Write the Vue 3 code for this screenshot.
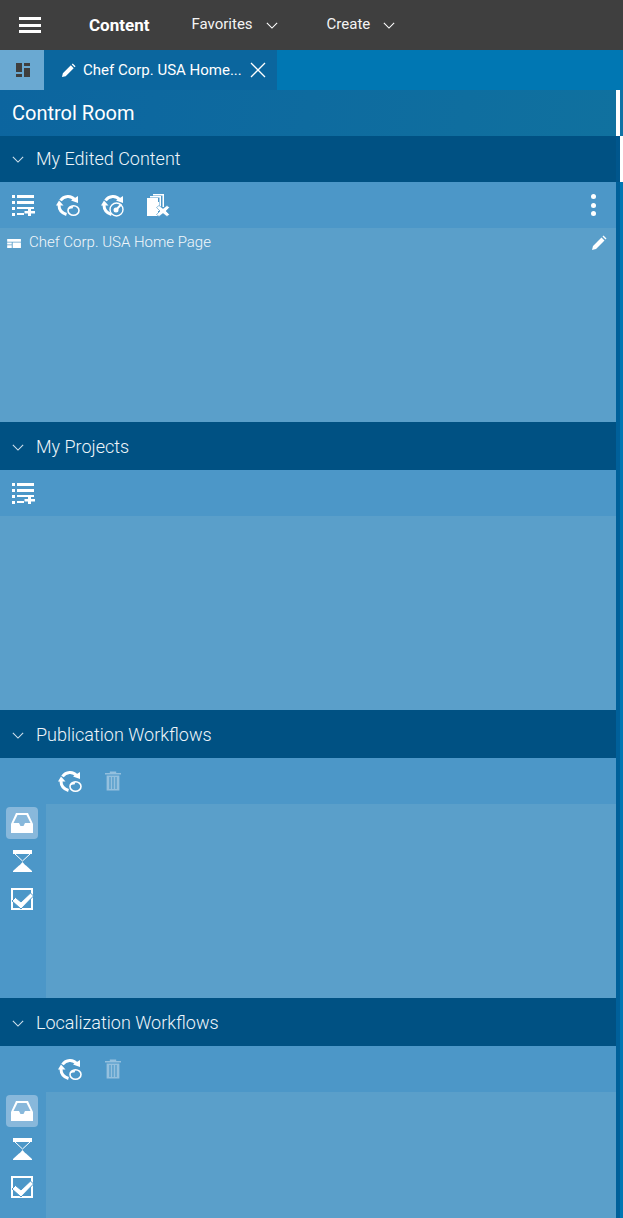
<template>
  <div class="page">
    <header class="top-bar">
      <button class="menu-btn" aria-label="Menu"><span></span><span></span><span></span></button>
      <span class="brand">Content</span>
      <span class="nav-item favorites">Favorites
        <svg class="caret" viewBox="0 0 14 8"><path d="M1 1l6 6 6-6" /></svg>
      </span>
      <span class="nav-item create">Create
        <svg class="caret" viewBox="0 0 14 8"><path d="M1 1l6 6 6-6" /></svg>
      </span>
    </header>

    <nav class="tab-bar">
      <div class="home-tab">
        <svg viewBox="0 0 14 14" width="14" height="14"><path d="M0 0h6v9H0zM8 0h6v3H8zM8 5h6v9H8zM0 11h6v3H0z" /></svg>
      </div>
      <div class="doc-tab">
        <svg class="tab-pencil" viewBox="0 0 16 16" width="15" height="15"><path d="M1 15l1-4 8.500-8.500 3 3L5 14z M11.500 1.500l1-1 3 3-1 1z" /></svg>
        <span class="tab-title">Chef Corp. USA Home...</span>
        <svg class="tab-close" viewBox="0 0 16 16" width="16" height="16"><path d="M1 1l14 14M15 1L1 15" /></svg>
      </div>
    </nav>

    <div class="workspace">
      <main class="room">
        <h1 class="room-title">Control Room</h1>

        <section v-for="panel in panels" :key="panel.title" class="panel" :class="panel.kind">
          <div class="panel-head" :class="{ first: panel.first }">
            <svg class="head-caret" viewBox="0 0 14 8"><path d="M1 1l6 6 6-6" /></svg>
            <span>{{ panel.title }}</span>
          </div>

          <div class="toolbar">
            <template v-if="panel.kind === 'workflow'">
              <svg class="tool wf-refresh" viewBox="0 0 24 24"><use href="#ic-refresh-o" /></svg>
              <svg class="tool trash" viewBox="0 0 20 24"><use href="#ic-trash" /></svg>
            </template>
            <template v-else>
              <svg class="tool" viewBox="0 0 24 24"><use href="#ic-list-add" /></svg>
              <template v-if="panel.full">
                <svg class="tool" viewBox="0 0 24 24"><use href="#ic-refresh-o" /></svg>
                <svg class="tool" viewBox="0 0 24 24"><use href="#ic-refresh-t" /></svg>
                <svg class="tool" viewBox="0 0 24 24"><use href="#ic-docs-x" /></svg>
                <div class="dots"><i></i><i></i><i></i></div>
              </template>
            </template>
          </div>

          <div class="panel-body">
            <div v-if="panel.kind === 'workflow'" class="side">
              <div class="side-btn active"><svg viewBox="0 0 24 24"><use href="#ic-inbox" /></svg></div>
              <div class="side-btn"><svg viewBox="0 0 24 24"><use href="#ic-hourglass" /></svg></div>
              <div class="side-btn"><svg viewBox="0 0 24 24"><use href="#ic-check" /></svg></div>
            </div>
            <div class="list">
              <div v-if="panel.full" class="row">
                <svg class="row-icon" viewBox="0 0 16 12"><path d="M0 1h15v3H0zM0 5h5v2H0zM6 5h9v6H6zM0 8h5v3H0z" /></svg>
                <span class="row-label">Chef Corp. USA Home Page</span>
                <svg class="row-pencil" viewBox="0 0 16 16"><path d="M1 15l1-4 8.500-8.500 3 3L5 14z M11.500 1.500l1-1 3 3-1 1z" /></svg>
              </div>
            </div>
          </div>
        </section>
      </main>

      <!-- two nested scrollbars sit side by side -->
      <div class="track inner">
        <div class="thumb"></div>
        <div class="inner-head"></div>
      </div>
      <div class="track outer">
        <div class="outer-top"></div>
        <div class="thumb"></div>
      </div>
    </div>

    <svg width="0" height="0" class="defs">
      <defs>
        <g id="ic-list-add">
          <path d="M1 2h3v3H1zM6 2h17v3H6zM1 8h3v3H1zM6 8h17v3H6zM1 14h3v3H1zM6 14h17v2H6zM1 20h3v3H1zM6 20h7v2H6z" />
          <path d="M17 15h3v3h4v2.500h-4V23h-3v-2.500h-3.500V18H17z" />
        </g>
        <g id="ic-refresh-o">
          <path d="M4.500 7.500C8 2.500 15 2 18.500 6.500" fill="none" stroke="#fff" stroke-width="3" />
          <path d="M15 7.500l7 2.500V3z" />
          <path d="M0 12.500l3-5 4.500 5z" />
          <path d="M3 12c0 4.500 2.500 8 7.500 9.500" fill="none" stroke="#fff" stroke-width="3" />
          <ellipse cx="17.500" cy="17.500" rx="5.500" ry="4.800" fill="#4c97c8" stroke="#fff" stroke-width="1.600" />
          <path d="M12 16.500c1-2.500 3-3.500 5.500-3.500l-1 2.500c-2 0-3 .5-4.500 1z" />
        </g>
        <g id="ic-refresh-t">
          <path d="M4.500 7.500C8 2.500 15 2 18.500 6.500" fill="none" stroke="#fff" stroke-width="3" />
          <path d="M15 7.500l7 2.500V3z" />
          <path d="M0 12.500l3-5 4.500 5z" />
          <path d="M3 12c0 4.500 2.500 8 7.500 9.500" fill="none" stroke="#fff" stroke-width="3" />
          <circle cx="15.500" cy="16.500" r="6.500" fill="#4c97c8" stroke="#fff" stroke-width="1.400" />
          <circle cx="15" cy="17" r="2.500" />
          <path d="M14.500 16l5-5.500 1.500 1.500-5 5.500z" />
        </g>
        <g id="ic-docs-x">
          <path d="M1 5h11v4h1v9h-1v5H1z" />
          <path d="M4 3h11v11h-1.500V4.500H4zM7 1h11v13h-1.500V2.500H7z" />
          <path d="M13 12.500l4 3 4-3 2.500 2-3.500 3.500 3.500 3.500-2.500 2-4-3-4 3-2.500-2 3.500-3.500-3.500-3.500z" stroke="#4c97c8" stroke-width="0.600" />
        </g>
        <g id="ic-trash">
          <path d="M0 2h20v2H0zM6 0h8v2H6zM2 5h16v19H2z" />
          <path d="M5.500 7h1.500v15H5.500zM9.200 7h1.500v15H9.200zM13 7h1.500v15H13z" fill="#4c97c8" />
        </g>
        <g id="ic-inbox">
          <path fill-rule="evenodd" d="M6 2h12l5 11v9H1v-9zM7.500 4L3.500 12h5.500l1.500 3h3l1.500-3h5.500l-4-8z" />
        </g>
        <g id="ic-hourglass">
          <path d="M3 1h19v4H3z" />
          <path d="M5 5l7.500 7L20 5" fill="none" stroke="#fff" stroke-width="1" />
          <path d="M12.500 13L9 17H16z" />
          <path d="M9 16.500h7l6 5.500v1H3v-1z" />
        </g>
        <g id="ic-check">
          <path fill-rule="evenodd" d="M1 1h22v22H1zM3 3v18h18V3z" />
          <path d="M2 14l3.500-3.500 5.500 4.500L20.500 6l3 3L11 22z" stroke="#4c97c8" stroke-width="1" />
        </g>
      </defs>
    </svg>
  </div>
</template>

<script setup>
const panels = [
  { title: 'My Edited Content', kind: 'edited', full: true, first: true },
  { title: 'My Projects', kind: 'projects' },
  { title: 'Publication Workflows', kind: 'workflow' },
  { title: 'Localization Workflows', kind: 'workflow' }
]
</script>

<style>
html, body {
  margin: 0;
  background: #0077b3;
  overflow: hidden;
}
</style>

<style scoped>
.page {
  width: 623px;
  height: 1218px;
  overflow: hidden;
  display: flex;
  flex-direction: column;
  font-family: Roboto, "Liberation Sans", sans-serif;
  color: #fff;
}

.defs {
  position: absolute;
}

svg {
  fill: #fff;
}

.top-bar {
  height: 50px;
  flex: none;
  background: #3f3f3f;
  display: flex;
  align-items: center;
  font-size: 15px;
}

.menu-btn {
  width: 22px;
  height: 16px;
  margin: 0 0 0 19px;
  padding: 0;
  border: 0;
  background: none;
  display: flex;
  flex-direction: column;
  justify-content: space-between;
}

.menu-btn span {
  display: block;
  height: 3px;
  background: #fff;
}

.brand {
  margin-left: 48px;
  font-size: 17px;
  font-weight: 700;
  margin-top: -1px;
}

.nav-item {
  display: flex;
  align-items: center;
  color: #f4f4f4;
  margin-top: -2px;
}

.favorites {
  margin-left: 42px;
}

.create {
  margin-left: 49px;
}

.caret {
  width: 12px;
  height: 7px;
  margin-left: 13px;
  margin-top: 3px;
  fill: none;
  stroke: #fff;
  stroke-width: 1.3;
}

.tab-bar {
  height: 40px;
  flex: none;
  background: #0077b3;
  display: flex;
}

.home-tab {
  width: 44px;
  padding-left: 2px;
  box-sizing: border-box;
  background: #6aa9d2;
  display: flex;
  align-items: center;
  justify-content: center;
}

.home-tab svg {
  fill: #3f3f3f;
}

.doc-tab {
  width: 233px;
  background: #0b669e;
  display: flex;
  align-items: center;
  font-size: 15px;
}

.tab-pencil {
  margin-left: 17px;
}

.tab-title {
  margin-left: 7px;
  white-space: nowrap;
}

.tab-close {
  margin-left: 8px;
  fill: none;
  stroke: #fff;
  stroke-width: 1.300;
}

.workspace {
  flex: 1;
  display: flex;
  min-height: 0;
}

.room {
  width: 616px;
  flex: none;
  background: #5a9fca;
}

.room-title {
  margin: 0;
  height: 46px;
  padding-left: 12px;
  line-height: 46px;
  font-size: 20px;
  font-weight: 400;
  background: linear-gradient(100deg, #0c659f, #10719f);
}

.panel-head {
  height: 48px;
  background: #005183;
  display: flex;
  align-items: center;
  font-size: 18px;
  font-weight: 300;
  color: #eef5fa;
}

.panel-head.first {
  height: 46px;
  box-sizing: border-box;
  padding-bottom: 2px;
}

.head-caret {
  width: 12px;
  height: 7px;
  margin: 3px 12px 0 12px;
  fill: none;
  stroke: #cfe0ec;
  stroke-width: 1.3;
}

.toolbar {
  height: 46px;
  background: #4c97c8;
  display: flex;
  align-items: center;
  padding-left: 11px;
  gap: 21px;
}

.tool {
  width: 24px;
  height: 24px;
  flex: none;
}

.wf-refresh {
  margin-left: 47px;
}

.trash {
  width: 16px;
  height: 22px;
  margin-left: 2px;
  opacity: 0.4;
}

.dots {
  margin-left: auto;
  margin-right: 20px;
  display: flex;
  flex-direction: column;
  gap: 3.500px;
}

.dots i {
  width: 5px;
  height: 5px;
  border-radius: 50%;
  background: #fff;
}

.panel-body {
  height: 194px;
  display: flex;
}

.side {
  width: 46px;
  flex: none;
  background: #4c97c8;
  padding: 3px 0 0 6px;
  box-sizing: border-box;
  display: flex;
  flex-direction: column;
  gap: 6px;
}

.side-btn {
  width: 32px;
  height: 32px;
  border-radius: 4px;
  display: flex;
  align-items: center;
  justify-content: center;
}

.side-btn.active {
  background: #88b8db;
}

.side-btn svg {
  width: 24px;
  height: 24px;
}

.list {
  flex: 1;
  background: #5a9fca;
}

.row {
  height: 28px;
  display: flex;
  align-items: center;
  font-size: 15px;
  font-weight: 300;
  color: #f2f7fb;
}

.row-icon {
  width: 15px;
  height: 11px;
  margin-left: 7px;
  margin-top: 2px;
}

.row-label {
  margin-left: 7px;
}

.row-pencil {
  width: 16px;
  height: 16px;
  margin-left: auto;
  margin-right: 9px;
  margin-top: 2px;
}

.track {
  flex: none;
}

.track.inner {
  width: 4px;
  background: #00609a;
}

.track.outer {
  width: 3px;
  background: #0077b3;
}

.thumb {
  height: 46px;
  background: #fff;
}

.inner-head {
  height: 46px;
  background: #00568c;
}

.outer-top {
  height: 46px;
  background: #0e72a5;
}
</style>
